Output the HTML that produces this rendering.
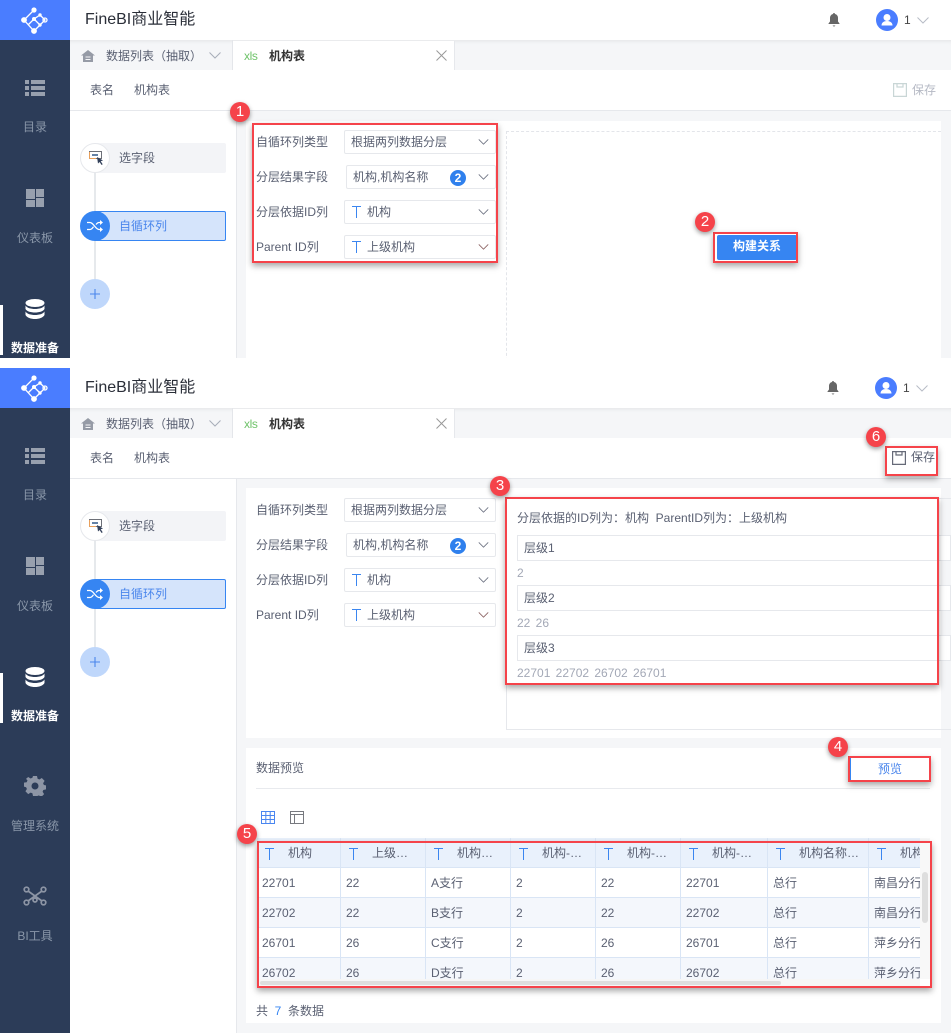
<!DOCTYPE html>
<html lang="zh"><head><meta charset="utf-8"><title>FineBI</title>
<style>
*{box-sizing:border-box}
html,body{margin:0;padding:0;background:#fff}
body{width:951px;height:1033px;position:relative;overflow:hidden;font:12px/18px "Liberation Sans","Noto Sans CJK SC",sans-serif;color:#5a6072}
.shot{position:absolute;left:0;width:951px;overflow:hidden;background:#f5f6f8}
.a{position:absolute}
.t{position:absolute;white-space:nowrap}
.side{position:absolute;left:0;top:0;width:70px;height:100%;background:#2c3c58}
.logo{position:absolute;left:0;top:0;width:70px;height:40px;background:#4a7dff}
.nl{position:absolute;left:0;width:70px;text-align:center;color:#8a97a9;line-height:18px}
.nl.on{color:#fff;font-weight:bold}
.sel{position:absolute;background:#fff;border:1px solid #e6e8ec;border-radius:2px;height:24px;color:#5a6072;line-height:22px}
.tt{position:absolute;left:7px;top:5px}
.chev{position:absolute;right:6px;top:8px;width:11px;height:6px;color:#6b7080}
.red{position:absolute;border:2px solid #f5434a;box-shadow:0 3px 6px rgba(0,0,0,.35);z-index:5}
.num{position:absolute;width:20px;height:20px;border-radius:50%;background:#f5434a;color:#fff;font-size:15px;line-height:20px;text-align:center;box-shadow:0 2px 5px rgba(0,0,0,.4);z-index:6}
.lv{position:absolute;left:517px;width:434px;height:26px;border:1px solid #e6e8ec;background:#fff;padding-left:6px;line-height:24px;color:#5a6072}
.v{position:absolute;left:517px;color:#a3a8b6;white-space:nowrap}
.v span{margin-left:5.3px}
</style></head><body>
<svg width="0" height="0" style="position:absolute">
<symbol id="logo" viewBox="0 0 70 40"><g fill="none" stroke="#fff" stroke-width="1.300"><path d="M34 10 24 20l10 11 6-6 5-5-5-5-6 4-6 6M34 19l6 6"/><circle cx="45" cy="20" r="2"/></g><g fill="#fff"><circle cx="34" cy="10" r="2.600"/><circle cx="24" cy="20" r="2.900"/><circle cx="34" cy="31" r="2.900"/><circle cx="40" cy="15" r="1.700"/><circle cx="40" cy="25" r="1.700"/><circle cx="34" cy="19" r="2"/></g></symbol>
<symbol id="list" viewBox="0 0 20 16"><path fill="#98a0ae" d="M0 0h4v4H0zM6 0h14v4H6zM0 6h4v4H0zM6 6h14v4H6zM0 12h4v4H0zM6 12h14v4H6z"/></symbol>
<symbol id="dash" viewBox="0 0 18 18"><path fill="#98a0ae" d="M0 0h9v10H0zM10 0h8v8h-8zM0 11h9v7H0zM10 9h8v9h-8z"/></symbol>
<symbol id="db" viewBox="0 0 20 20"><g fill="#fff"><ellipse cx="10" cy="4" rx="9.500" ry="4"/><path d="M.5 6.500C2 9 6 10 10 10s8-1 9.500-3.500V10C18 12.500 14 13.500 10 13.500S2 12.500.5 10z"/><path d="M.5 12.500C2 15 6 16 10 16s8-1 9.500-3.500V16c-1.500 2.700-5.500 4-9.500 4s-8-1.300-9.500-4z"/></g></symbol>
<symbol id="gear" viewBox="-1 0 22 20"><path fill="#8d95a5" fill-rule="evenodd" d="M8 0h4l.6 2.700 1.800.8L16.800 2l2.800 2.900-1.500 2.300.8 1.800 2.100.4v4l-2.700.6-.7 1.800 1.500 2.300-2.800 2.800-2.400-1.500-1.800.7L12 20H8l-.6-2.700-1.800-.7L3.200 18.100.4 15.300l1.500-2.300-.8-1.800L-1 10.600v-4l2.700-.4.8-1.800L1 2.900 3.200 1l2.400 1.500 1.800-.8zM10 6.500a3.500 3.500 0 1 0 0 7 3.500 3.500 0 0 0 0-7z"/></symbol>
<symbol id="tool" viewBox="0 0 24 20"><g fill="none" stroke="#8d95a5" stroke-width="1.700"><circle cx="3.500" cy="3.500" r="2.300"/><circle cx="20.500" cy="3.500" r="2.300"/><circle cx="3.500" cy="16.500" r="2.300"/><circle cx="20.500" cy="16.500" r="2.300"/><circle cx="12" cy="14" r="2"/><path d="M5 5l14 10M19 5 5 15"/></g></symbol>
<symbol id="bell" viewBox="0 0 12 14"><path fill="#666" d="M6 0c.6 0 1 .4 1 1 2 .5 3 2 3 4v3.500l1.500 2v.5H.5v-.5l1.500-2V5c0-2 1-3.500 3-4 0-.6.4-1 1-1zM4.500 12.500h3L6 13.800z"/></symbol>
<symbol id="user" viewBox="0 0 22 22"><circle cx="11" cy="11" r="11" fill="#4a7dff"/><circle cx="11" cy="8.500" r="3.500" fill="#fff"/><path fill="#fff" d="M5.500 16.500c0-3 2.500-4.500 5.500-4.500s5.500 1.500 5.500 4.500z"/></symbol>
<symbol id="home" viewBox="0 0 14 12"><path fill="#969ba6" d="M7 0l7 5.500H12V12H2V5.500H0zM4.500 6.500v1h5v-1zM4.500 9v1h5V9z" fill-rule="evenodd"/></symbol>
<symbol id="save" viewBox="0 0 14 14"><path fill="none" stroke="currentColor" stroke-width="1.200" d="M.6.600h12.800v12.800H.6zM4 .6v3.400h6V.6"/></symbol>
<symbol id="T" viewBox="0 0 9 12"><path fill="none" stroke="#3b86f0" stroke-width="1" d="M0 .5h9M4.500 .5V12"/></symbol>
<symbol id="ch" viewBox="0 0 12 7"><path fill="none" stroke="currentColor" stroke-width="1" d="M.5.500 6 6 11.500.5"/></symbol>
<symbol id="pick" viewBox="0 0 15 15"><path fill="none" stroke="#6d7078" stroke-width="1" d="M.5.500h12v7H.5z"/><path fill="none" stroke="#e8a05c" stroke-width="1" d="M.5 1v6.500H7"/><path fill="#6482a6" d="M3 3h6v2H3z"/><path fill="#33405a" d="M8 6l6 3.500-2.300.8 2 3-1.100.7-2-3L9 12.500z"/></symbol>
<symbol id="shuf" viewBox="0 0 16 12"><path fill="none" stroke="#fff" stroke-width="1.300" d="M0 2.500h3c3.500 0 5.500 7 9 7h3M0 9.500h3c1.500 0 2.500-1.300 3.500-2.800M9 4.500c1-1.200 2-2 3-2h3"/><path fill="#fff" d="M13 0l3 2.500-3 2.500zM13 7l3 2.500-3 2.500z"/></symbol>
<symbol id="grid" viewBox="0 0 14 13"><path fill="none" stroke="#4a86f0" stroke-width="1" d="M.5.500h13v12H.5zM.5 4.500h13M.5 8.500h13M4.800.5v12M9.200.5v12"/></symbol>
<symbol id="tbl" viewBox="0 0 14 13"><path fill="none" stroke="#77797f" stroke-width="1" d="M.5.500h13v12H.5zM.5 3.500h13M4.500 3.500v9"/></symbol>
<symbol id="plus" viewBox="0 0 9 9"><path fill="none" stroke="#4a86ec" stroke-width="1" d="M0 4.500h9M4.500 0v9"/></symbol>
<symbol id="x" viewBox="0 0 11 11"><path fill="none" stroke="#999" stroke-width="1" d="M.5.500l10 10M10.500.5l-10 10"/></symbol>
</svg>

<!-- TOP SHOT -->
<div class="shot" style="top:0;height:358px">
<div class="side">
<div class="logo"><svg class="a" style="left:0;top:0" width="70" height="40"><use href="#logo"/></svg></div>
<svg class="a" style="left:25px;top:80px" width="20" height="16"><use href="#list"/></svg><div class="nl" style="top:118px">目录</div>
<svg class="a" style="left:26px;top:189px" width="18" height="18"><use href="#dash"/></svg><div class="nl" style="top:229px">仪表板</div>
<svg class="a" style="left:25px;top:299px" width="20" height="20"><use href="#db"/></svg><div class="nl on" style="top:339px">数据准备</div>
<div class="a" style="left:0;top:305px;width:3px;height:50px;background:#fff"></div>
</div>
<div class="a" style="left:70px;top:0;width:881px;height:40px;background:#fff"></div>
<div class="t" style="left:85px;top:9px;font-size:16px;line-height:22px;color:#2a2e38">FineBI商业智能</div>
<svg class="a" style="left:828px;top:13px" width="12" height="14"><use href="#bell"/></svg>
<svg class="a" style="left:876px;top:9px" width="22" height="22"><use href="#user"/></svg>
<div class="t" style="left:904px;top:11px;color:#444">1</div>
<svg class="a" style="left:917px;top:17px;color:#b8bcc6" width="12" height="7"><use href="#ch"/></svg>
<div class="a" style="left:70px;top:40px;width:881px;height:30px;background:#f5f6f8;box-shadow:inset 0 4px 4px -3px rgba(0,0,0,.08)"></div>
<svg class="a" style="left:81px;top:50px" width="14" height="12"><use href="#home"/></svg>
<div class="t" style="left:106px;top:47px">数据列表（抽取）</div>
<svg class="a" style="left:209px;top:52px;color:#a7adb9" width="12" height="7"><use href="#ch"/></svg>
<div class="a" style="left:232px;top:40px;width:1px;height:30px;background:#e4e6ea"></div>
<div class="a" style="left:233px;top:41px;width:222px;height:29px;background:#fff;border-right:1px solid #e6e8ec"></div>
<div class="t" style="left:244px;top:47px;color:#6fc36a;font-size:12px;letter-spacing:-.4px">xls</div>
<div class="t" style="left:269px;top:47px;color:#333;font-weight:bold">机构表</div>
<svg class="a" style="left:436px;top:50px" width="11" height="11"><use href="#x"/></svg>
<div class="a" style="left:70px;top:70px;width:881px;height:41px;background:#fff;border-bottom:1px solid #e6e8ec"></div>
<div class="t" style="left:90px;top:81px">表名</div><div class="t" style="left:134px;top:81px">机构表</div>
<svg class="a" style="left:893px;top:83px;color:#c9d6d6" width="14" height="14"><use href="#save"/></svg>
<div class="t" style="left:912px;top:81px;color:#b5b9c4">保存</div>
<div class="a" style="left:70px;top:111px;width:167px;height:247px;background:#fff;border-right:1px solid #e6e8ec"></div>
<div class="a" style="left:94px;top:173px;width:2px;height:110px;background:#e6e9ec"></div>
<div class="a" style="left:95px;top:143px;width:131px;height:30px;background:#f3f4f7;border-radius:0 2px 2px 0"></div>
<div class="a" style="left:80px;top:143px;width:30px;height:30px;border-radius:50%;background:#fff;border:1px solid #e6e8ec"></div>
<svg class="a" style="left:89px;top:151px" width="15" height="15"><use href="#pick"/></svg>
<div class="t" style="left:119px;top:149px">选字段</div>
<div class="a" style="left:95px;top:211px;width:131px;height:30px;background:#d5e4fb;border:1px solid #3685f2;border-left:0;border-radius:0 2px 2px 0"></div>
<div class="a" style="left:80px;top:211px;width:30px;height:30px;border-radius:50%;background:#3685f2"></div>
<svg class="a" style="left:87px;top:220px" width="16" height="12"><use href="#shuf"/></svg>
<div class="t" style="left:119px;top:217px;color:#4a86ec">自循环列</div>
<div class="a" style="left:80px;top:279px;width:30px;height:30px;border-radius:50%;background:#bfd7fb"></div>
<svg class="a" style="left:90px;top:289px" width="10" height="10"><use href="#plus"/></svg>
<div class="a" style="left:246px;top:121px;width:695px;height:237px;background:#fff"></div>
<div class="t" style="left:256px;top:133px">自循环列类型</div><div class="t" style="left:256px;top:168px">分层结果字段</div><div class="t" style="left:256px;top:203px">分层依据ID列</div><div class="t" style="left:256px;top:238px">Parent ID列</div>
<div class="sel" style="left:344px;top:130px;width:152px;padding-left:6px">根据两列数据分层<svg class="chev"><use href="#ch"/></svg></div>
<div class="sel" style="left:346px;top:165px;width:150px;padding-left:6px">机构,机构名称<span class="a" style="left:103px;top:4px;width:16px;height:16px;border-radius:50%;background:#2f80ed;color:#fff;text-align:center;line-height:16px;font-weight:bold">2</span><svg class="chev"><use href="#ch"/></svg></div>
<div class="sel" style="left:344px;top:200px;width:152px;padding-left:22px"><svg class="tt" width="9" height="12"><use href="#T"/></svg>机构<svg class="chev"><use href="#ch"/></svg></div>
<div class="sel" style="left:344px;top:235px;width:152px;padding-left:22px"><svg class="tt" width="9" height="12"><use href="#T"/></svg>上级机构<svg class="chev" style="color:#8a6060"><use href="#ch"/></svg></div>
<div class="a" style="left:506px;top:131px;width:435px;height:240px;border:1px dashed #e3e5ea;border-right:0"></div>
<div class="a" style="left:717px;top:235px;width:80px;height:25px;background:#3685f2;border-radius:2px;color:#fff;text-align:center;line-height:23px;font-weight:bold">构建关系</div>
<div class="red" style="left:252px;top:123px;width:246px;height:140px"></div>
<div class="red" style="left:713px;top:232px;width:85px;height:31px"></div>
<div class="num" style="left:230px;top:102px">1</div>
<div class="num" style="left:695px;top:212px">2</div>
</div>

<!-- BOTTOM SHOT -->
<div class="shot" style="top:368px;height:665px">
<div class="side">
<div class="logo"><svg class="a" style="left:0;top:0" width="70" height="40"><use href="#logo"/></svg></div>
<svg class="a" style="left:25px;top:80px" width="20" height="16"><use href="#list"/></svg><div class="nl" style="top:118px">目录</div>
<svg class="a" style="left:26px;top:189px" width="18" height="18"><use href="#dash"/></svg><div class="nl" style="top:229px">仪表板</div>
<svg class="a" style="left:25px;top:299px" width="20" height="20"><use href="#db"/></svg><div class="nl on" style="top:339px">数据准备</div>
<div class="a" style="left:0;top:305px;width:3px;height:50px;background:#fff"></div>
<svg class="a" style="left:24px;top:408px" width="22" height="20"><use href="#gear"/></svg><div class="nl" style="top:449px">管理系统</div>
<svg class="a" style="left:23px;top:518px" width="24" height="20"><use href="#tool"/></svg><div class="nl" style="top:559px">BI工具</div>
</div>
<div class="a" style="left:70px;top:0;width:881px;height:40px;background:#fff"></div>
<div class="t" style="left:85px;top:9px;font-size:16px;line-height:22px;color:#2a2e38">FineBI商业智能</div>
<svg class="a" style="left:827px;top:13px" width="12" height="14"><use href="#bell"/></svg>
<svg class="a" style="left:875px;top:9px" width="22" height="22"><use href="#user"/></svg>
<div class="t" style="left:903px;top:11px;color:#444">1</div>
<svg class="a" style="left:916px;top:17px;color:#b8bcc6" width="12" height="7"><use href="#ch"/></svg>
<div class="a" style="left:70px;top:40px;width:881px;height:30px;background:#f5f6f8;box-shadow:inset 0 4px 4px -3px rgba(0,0,0,.08)"></div>
<svg class="a" style="left:81px;top:50px" width="14" height="12"><use href="#home"/></svg>
<div class="t" style="left:106px;top:47px">数据列表（抽取）</div>
<svg class="a" style="left:209px;top:52px;color:#a7adb9" width="12" height="7"><use href="#ch"/></svg>
<div class="a" style="left:232px;top:40px;width:1px;height:30px;background:#e4e6ea"></div>
<div class="a" style="left:233px;top:41px;width:222px;height:29px;background:#fff;border-right:1px solid #e6e8ec"></div>
<div class="t" style="left:244px;top:47px;color:#6fc36a;font-size:12px;letter-spacing:-.4px">xls</div>
<div class="t" style="left:269px;top:47px;color:#333;font-weight:bold">机构表</div>
<svg class="a" style="left:436px;top:50px" width="11" height="11"><use href="#x"/></svg>
<div class="a" style="left:70px;top:70px;width:881px;height:41px;background:#fff;border-bottom:1px solid #e6e8ec"></div>
<div class="t" style="left:90px;top:81px">表名</div><div class="t" style="left:134px;top:81px">机构表</div>
<svg class="a" style="left:892px;top:83px;color:#666a78" width="14" height="14"><use href="#save"/></svg>
<div class="t" style="left:911px;top:80px">保存</div>
<div class="a" style="left:70px;top:111px;width:167px;height:554px;background:#fff;border-right:1px solid #e6e8ec"></div>
<div class="a" style="left:94px;top:173px;width:2px;height:110px;background:#e6e9ec"></div>
<div class="a" style="left:95px;top:143px;width:131px;height:30px;background:#f3f4f7;border-radius:0 2px 2px 0"></div>
<div class="a" style="left:80px;top:143px;width:30px;height:30px;border-radius:50%;background:#fff;border:1px solid #e6e8ec"></div>
<svg class="a" style="left:89px;top:151px" width="15" height="15"><use href="#pick"/></svg>
<div class="t" style="left:119px;top:149px">选字段</div>
<div class="a" style="left:95px;top:211px;width:131px;height:30px;background:#d5e4fb;border:1px solid #3685f2;border-left:0;border-radius:0 2px 2px 0"></div>
<div class="a" style="left:80px;top:211px;width:30px;height:30px;border-radius:50%;background:#3685f2"></div>
<svg class="a" style="left:87px;top:220px" width="16" height="12"><use href="#shuf"/></svg>
<div class="t" style="left:119px;top:217px;color:#4a86ec">自循环列</div>
<div class="a" style="left:80px;top:279px;width:30px;height:30px;border-radius:50%;background:#bfd7fb"></div>
<svg class="a" style="left:90px;top:289px" width="10" height="10"><use href="#plus"/></svg>
<div class="a" style="left:246px;top:120px;width:695px;height:250px;background:#fff"></div>
<div class="t" style="left:256px;top:133px">自循环列类型</div><div class="t" style="left:256px;top:168px">分层结果字段</div><div class="t" style="left:256px;top:203px">分层依据ID列</div><div class="t" style="left:256px;top:238px">Parent ID列</div>
<div class="sel" style="left:344px;top:130px;width:152px;padding-left:6px">根据两列数据分层<svg class="chev"><use href="#ch"/></svg></div>
<div class="sel" style="left:346px;top:165px;width:150px;padding-left:6px">机构,机构名称<span class="a" style="left:103px;top:4px;width:16px;height:16px;border-radius:50%;background:#2f80ed;color:#fff;text-align:center;line-height:16px;font-weight:bold">2</span><svg class="chev"><use href="#ch"/></svg></div>
<div class="sel" style="left:344px;top:200px;width:152px;padding-left:22px"><svg class="tt" width="9" height="12"><use href="#T"/></svg>机构<svg class="chev"><use href="#ch"/></svg></div>
<div class="sel" style="left:344px;top:235px;width:152px;padding-left:22px"><svg class="tt" width="9" height="12"><use href="#T"/></svg>上级机构<svg class="chev" style="color:#8a6060"><use href="#ch"/></svg></div>
<div class="a" style="left:506px;top:130px;width:445px;height:232px;border:1px solid #e6e8ec;border-right:0"></div>
<div class="t" style="left:517px;top:141px">分层依据的ID列为：机构&nbsp;&nbsp;ParentID列为：上级机构</div>
<div class="lv" style="top:167px">层级1</div><div class="v" style="top:196px">2</div>
<div class="lv" style="top:217px">层级2</div><div class="v" style="top:246px">22<span>26</span></div>
<div class="lv" style="top:267px">层级3</div><div class="v" style="top:296px">22701<span>22702</span><span>26702</span><span>26701</span></div>

<div class="a" style="left:246px;top:380px;width:695px;height:275px;background:#fff"></div>
<div class="t" style="left:256px;top:391px">数据预览</div>
<div class="a" style="left:256px;top:420px;width:674px;height:1px;background:#e8eaee"></div>
<div class="a" style="left:850px;top:389px;width:80px;height:24px;border:1px solid #3685f2;background:#fff;color:#4a86ec;text-align:center;line-height:22px">预览</div>
<svg class="a" style="left:261px;top:443px" width="14" height="13"><use href="#grid"/></svg>
<svg class="a" style="left:290px;top:443px" width="14" height="13"><use href="#tbl"/></svg>

<div class="a" style="left:257px;top:611px;width:663px;height:7px;background:#f6f6f6"></div>
<div class="a" style="left:920px;top:470px;width:10px;height:141px;background:#f8f8f8"></div>
<div class="a" style="left:257px;top:470px;width:663px;height:141px;overflow:hidden;background:#fff">
<div class="a" style="left:0;top:0;width:663px;height:30px;background:#e9f1fc"></div>
<div class="a" style="left:0;top:60px;width:663px;height:30px;background:#f4f7fc"></div>
<div class="a" style="left:0;top:120px;width:663px;height:30px;background:#f4f7fc"></div>
<div class="a" style="left:0;top:29px;width:663px;height:1px;background:#d9e5f5"></div>
<div class="a" style="left:0;top:59px;width:663px;height:1px;background:#d9e5f5"></div>
<div class="a" style="left:0;top:89px;width:663px;height:1px;background:#d9e5f5"></div>
<div class="a" style="left:0;top:119px;width:663px;height:1px;background:#d9e5f5"></div>
<div class="a" style="left:83px;top:0;width:1px;height:141px;background:#d9e5f5"></div>
<div class="a" style="left:168px;top:0;width:1px;height:141px;background:#d9e5f5"></div>
<div class="a" style="left:253px;top:0;width:1px;height:141px;background:#d9e5f5"></div>
<div class="a" style="left:338px;top:0;width:1px;height:141px;background:#d9e5f5"></div>
<div class="a" style="left:423px;top:0;width:1px;height:141px;background:#d9e5f5"></div>
<div class="a" style="left:510px;top:0;width:1px;height:141px;background:#d9e5f5"></div>
<div class="a" style="left:611px;top:0;width:1px;height:141px;background:#d9e5f5"></div>

<svg class="a" style="left:8px;top:10px" width="9" height="12"><use href="#T"/></svg><div class="t" style="left:31px;top:6px">机构</div>
<svg class="a" style="left:92px;top:10px" width="9" height="12"><use href="#T"/></svg><div class="t" style="left:115px;top:6px">上级…</div>
<svg class="a" style="left:177px;top:10px" width="9" height="12"><use href="#T"/></svg><div class="t" style="left:200px;top:6px">机构…</div>
<svg class="a" style="left:262px;top:10px" width="9" height="12"><use href="#T"/></svg><div class="t" style="left:285px;top:6px">机构-…</div>
<svg class="a" style="left:347px;top:10px" width="9" height="12"><use href="#T"/></svg><div class="t" style="left:370px;top:6px">机构-…</div>
<svg class="a" style="left:432px;top:10px" width="9" height="12"><use href="#T"/></svg><div class="t" style="left:455px;top:6px">机构-…</div>
<svg class="a" style="left:519px;top:10px" width="9" height="12"><use href="#T"/></svg><div class="t" style="left:542px;top:6px">机构名称…</div>
<svg class="a" style="left:620px;top:10px" width="9" height="12"><use href="#T"/></svg><div class="t" style="left:643px;top:6px">机构</div>

<div class="t" style="left:5px;top:36px">22701</div><div class="t" style="left:89px;top:36px">22</div><div class="t" style="left:174px;top:36px">A支行</div><div class="t" style="left:259px;top:36px">2</div><div class="t" style="left:344px;top:36px">22</div><div class="t" style="left:429px;top:36px">22701</div><div class="t" style="left:516px;top:36px">总行</div><div class="t" style="left:617px;top:36px">南昌分行</div>
<div class="t" style="left:5px;top:66px">22702</div><div class="t" style="left:89px;top:66px">22</div><div class="t" style="left:174px;top:66px">B支行</div><div class="t" style="left:259px;top:66px">2</div><div class="t" style="left:344px;top:66px">22</div><div class="t" style="left:429px;top:66px">22702</div><div class="t" style="left:516px;top:66px">总行</div><div class="t" style="left:617px;top:66px">南昌分行</div>
<div class="t" style="left:5px;top:96px">26701</div><div class="t" style="left:89px;top:96px">26</div><div class="t" style="left:174px;top:96px">C支行</div><div class="t" style="left:259px;top:96px">2</div><div class="t" style="left:344px;top:96px">26</div><div class="t" style="left:429px;top:96px">26701</div><div class="t" style="left:516px;top:96px">总行</div><div class="t" style="left:617px;top:96px">萍乡分行</div>
<div class="t" style="left:5px;top:126px">26702</div><div class="t" style="left:89px;top:126px">26</div><div class="t" style="left:174px;top:126px">D支行</div><div class="t" style="left:259px;top:126px">2</div><div class="t" style="left:344px;top:126px">26</div><div class="t" style="left:429px;top:126px">26702</div><div class="t" style="left:516px;top:126px">总行</div><div class="t" style="left:617px;top:126px">萍乡分行</div>
</div>
<div class="a" style="left:260px;top:613px;width:521px;height:4px;background:#dedede;border-radius:2px"></div>
<div class="a" style="left:922px;top:504px;width:6px;height:51px;background:#dedede;border-radius:3px"></div>
<div class="t" style="left:256px;top:634px">共&nbsp;&nbsp;<span style="color:#3685f2">7</span>&nbsp;&nbsp;条数据</div>

<div class="red" style="left:505px;top:129px;width:434px;height:188px"></div>
<div class="red" style="left:848px;top:388px;width:83px;height:26px"></div>
<div class="red" style="left:257px;top:473px;width:675px;height:147px"></div>
<div class="red" style="left:885px;top:78px;width:53px;height:30px"></div>
<div class="num" style="left:490px;top:108px">3</div>
<div class="num" style="left:828px;top:369px">4</div>
<div class="num" style="left:237px;top:456px">5</div>
<div class="num" style="left:866px;top:59px">6</div>
</div>
</body></html>
